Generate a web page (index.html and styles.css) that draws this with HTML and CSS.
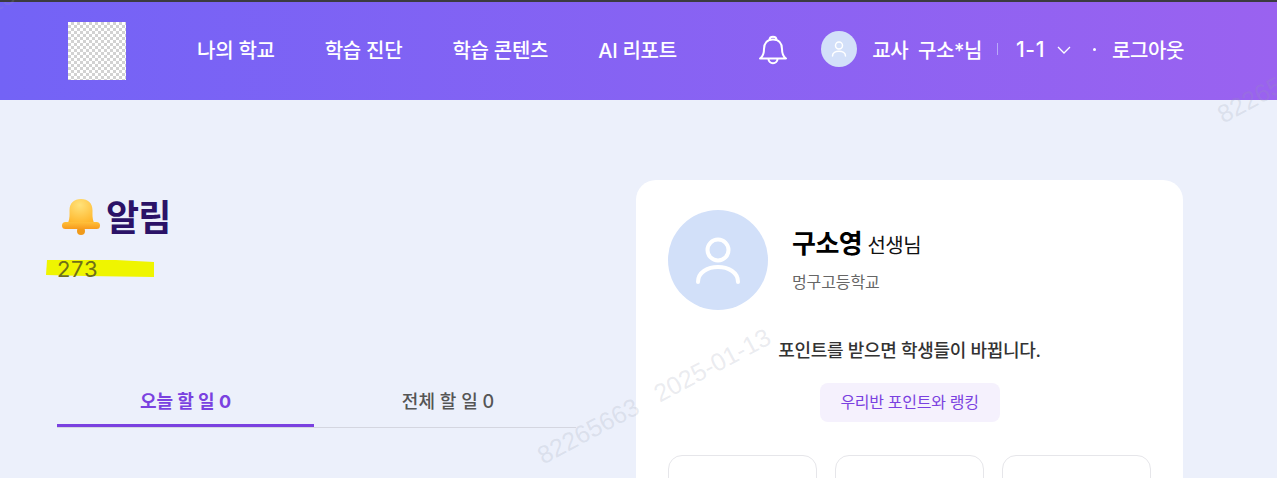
FILE: index.html
```html
<!DOCTYPE html>
<html lang="ko">
	<head>
		<meta charset="UTF-8">
		<meta name="viewport" content="width=device-width, initial-scale=1">
		<title>알림</title>
		<link rel="stylesheet" href="styles.css">
	</head>
	<body>
		<header class="top-bar">
			<div class="logo"></div>
			<nav class="main-nav">
				<a href="#">나의 학교</a>
				<a href="#">학습 진단</a>
				<a href="#">학습 콘텐츠</a>
				<a href="#">AI 리포트</a>
			</nav>
			<div class="user-menu">
				<svg class="bell-line" width="30" height="32" viewBox="0 0 30 32" fill="none" stroke="#fff" stroke-width="2" stroke-linecap="round" stroke-linejoin="round">
					<path d="M11.5 7 C11.5 2.5 18.5 2.5 18.5 7"/>
					<path d="M2 25.5 C5 23.5 6 20 6 16 C6 10 9.500 6.500 15 6.500 C20.500 6.500 24 10 24 16 C24 20 25 23.500 28 25.500 Z"/>
					<path d="M10.500 26 C10.500 31.500 19.500 31.500 19.500 26"/>
				</svg>
				<span class="avatar-small">
					<svg width="20" height="20" viewBox="0 0 20 20" fill="none" stroke="#fff" stroke-width="1.500" stroke-linecap="round">
						<circle cx="10" cy="6.500" r="3.500"/>
						<path d="M3.500 17 C3.500 10.500 16.500 10.500 16.500 17"/>
					</svg>
				</span>
				<span class="user-name">교사&nbsp; 구소*님</span>
				<span class="divider"></span>
				<span class="class-name">1-1</span>
				<svg class="chevron" width="14" height="8" viewBox="0 0 14 8" fill="none" stroke="#fff" stroke-width="1.300">
					<path d="M1 1 L7 7 L13 1"/>
				</svg>
				<span class="dot"></span>
				<a class="logout" href="#">로그아웃</a>
			</div>
		</header>

		<main class="content">
			<section class="left-col">
				<h1 class="page-title">
					<svg class="bell-emoji" width="42" height="38" viewBox="0 0 42 38">
						<defs>
							<radialGradient id="bell-fill" cx="0.45" cy="0.25" r="0.85">
								<stop offset="0" stop-color="#ffe27a"/>
								<stop offset="1" stop-color="#ffb427"/>
							</radialGradient>
							<linearGradient id="brim-fill" x1="0" y1="0" x2="0" y2="1">
								<stop offset="0" stop-color="#ffc03a"/>
								<stop offset="1" stop-color="#f79a1c"/>
							</linearGradient>
						</defs>
						<circle cx="21" cy="33" r="4" fill="#f09a1a"/>
						<path d="M8 25 C10 20 9.500 16 9.500 12.500 C9.500 5 14 1 21 1 C28 1 32.500 5 32.500 12.500 C32.500 16 32 20 34 25 Z" fill="url(#bell-fill)"/>
						<rect x="2" y="24" width="38" height="7" rx="3.500" fill="url(#brim-fill)"/>
					</svg>
					<span>알림</span>
				</h1>
				<div class="count-row">
					<svg class="marker" width="108" height="19" viewBox="0 0 108 19" aria-hidden="true">
						<path d="M1 1 L70 1 L108 3 L108 18 L40 17 L0 16 Z" fill="#eff500"/>
					</svg>
					<span class="count">273</span>
				</div>
				<div class="tabs">
					<a class="tab tab-active" href="#">오늘 할 일 0</a>
					<a class="tab" href="#">전체 할 일 0</a>
				</div>
			</section>

			<aside class="profile-card">
				<div class="profile-head">
					<div class="avatar-large">
						<svg width="48" height="48" viewBox="0 0 48 48" fill="none" stroke="#fff" stroke-width="4" stroke-linecap="round">
							<circle cx="24" cy="14" r="10.500"/>
							<path d="M4 46 C4 26 44 26 44 46"/>
						</svg>
					</div>
					<div class="profile-text">
						<p class="teacher-name"><strong>구소영</strong> 선생님</p>
						<p class="school-name">멍구고등학교</p>
					</div>
				</div>
				<p class="point-text">포인트를 받으면 학생들이 바뀝니다.</p>
				<a class="rank-btn" href="#">우리반 포인트와 랭킹</a>
				<div class="stat-cards">
					<div class="stat-card"></div>
					<div class="stat-card"></div>
					<div class="stat-card"></div>
				</div>
			</aside>
		</main>

		<div class="watermark wm-main">82265663&nbsp;&nbsp; 2025-01-13</div>
		<div class="watermark wm-right">82265663</div>
		<div class="watermark wm-corner">13</div>
	</body>
</html>
```

FILE: styles.css
```css
* {
	box-sizing: border-box;
}
html,
body {
	height: 478px;
	overflow: hidden;
}
body {
	margin: 0;
	position: relative;
	background: #ecf0fb;
	font-family: Inter, "Noto Sans CJK KR", sans-serif;
	color: #333;
}
a {
	color: inherit;
	text-decoration: none;
}
p,
h1 {
	margin: 0;
}

/* header */
.top-bar {
	height: 100px;
	display: flex;
	align-items: center;
	padding: 0 93px 2px 68px;
	border-top: 2px solid #3b3b40;
	background: linear-gradient(90deg, #7363f6, #9a62f0);
	color: #fff;
}
.logo {
	width: 58px;
	height: 58px;
	margin-top: 2px;
	background: repeating-conic-gradient(#d2d2d2 0 25%, #fff 0 50%) 0 0 / 6px 6px;
}
.main-nav {
	display: flex;
	gap: 50px;
	margin-left: 71px;
	margin-bottom: 2px;
	font-size: 20px;
	font-weight: 500;
	letter-spacing: -.25px;
}
.user-menu {
	display: flex;
	align-items: center;
	margin-left: auto;
	margin-bottom: 2px;
	font-size: 20px;
	font-weight: 500;
	letter-spacing: -.4px;
}
.bell-line {
	margin-right: 33px;
}
.avatar-small {
	width: 36px;
	height: 36px;
	border-radius: 50%;
	background: #d3e0f9;
	display: flex;
	align-items: center;
	justify-content: center;
	margin-right: 15px;
}
.divider {
	width: 1px;
	height: 12px;
	margin: 0 18px 0 15px;
	background: #b9a9f8;
}
.class-name {
	font-size: 21px;
	letter-spacing: .6px;
}
.chevron {
	margin: 2px 22px 0 12px;
}
.dot {
	width: 3px;
	height: 3px;
	border-radius: 50%;
	background: #fff;
	margin-right: 16px;
}

/* main */
.content {
	display: flex;
	height: 378px;
	overflow: hidden;
	padding: 80px 0 0 57px;
}
.left-col {
	width: 519px;
	margin-right: 60px;
}
.page-title {
	display: flex;
	align-items: center;
	gap: 4px;
	height: 44px;
	margin-top: 13px;
	font-size: 36px;
	font-weight: 700;
	color: #2b1267;
	letter-spacing: -.8px;
}
.bell-emoji {
	margin-left: 3px;
	margin-top: 4px;
}
.count-row {
	position: relative;
	height: 24px;
	margin-top: 19px;
	font-size: 22px;
	line-height: 26px;
	letter-spacing: .7px;
	color: #6f6f18;
}
.marker {
	position: absolute;
	left: -11px;
	top: 3px;
}
.count {
	position: relative;
}
.tabs {
	display: flex;
	margin-top: 100px;
	border-bottom: 1px solid #d4d6e0;
}
.tab {
	flex: 0 0 257px;
	height: 47px;
	padding-top: 7px;
	text-align: center;
	font-size: 18px;
	font-weight: 500;
	color: #555;
}
.tab + .tab {
	flex: 1;
	padding-left: 6px;
}
.tab-active {
	font-weight: 700;
	color: #7a41e0;
	border-bottom: 3px solid #7a41e0;
	margin-bottom: -1px;
}

/* profile card */
.profile-card {
	width: 547px;
	height: 400px;
	padding: 30px 32px;
	border-radius: 20px;
	background: #fff;
	display: flex;
	flex-direction: column;
	align-items: center;
}
.profile-head {
	align-self: stretch;
	display: flex;
	align-items: center;
	gap: 24px;
}
.profile-text {
	padding-top: 1px;
}
.avatar-large {
	width: 100px;
	height: 100px;
	border-radius: 50%;
	background: #d2e0f9;
	display: flex;
	align-items: center;
	justify-content: center;
}
.teacher-name {
	font-size: 20px;
	line-height: 32px;
	color: #111;
	letter-spacing: -.5px;
}
.teacher-name strong {
	font-size: 26px;
	color: #000;
}
.school-name {
	margin-top: 9px;
	font-size: 16px;
	line-height: 22px;
	color: #666;
	letter-spacing: -.1px;
}
.point-text {
	margin-top: 29px;
	font-size: 18px;
	line-height: 24px;
	font-weight: 500;
	letter-spacing: -.3px;
}
.rank-btn {
	margin-top: 20px;
	width: 180px;
	height: 40px;
	line-height: 39px;
	text-align: center;
	border-radius: 8px;
	background: #f5f1fd;
	color: #7a41e0;
	font-size: 16px;
	letter-spacing: -.3px;
}
.stat-cards {
	align-self: stretch;
	display: flex;
	gap: 18px;
	margin-top: 33px;
}
.stat-card {
	flex: 0 0 149px;
	height: 100px;
	border: 1px solid #e6e6ea;
	border-radius: 14px;
}

/* watermark laid over the page */
.watermark {
	position: absolute;
	transform: rotate(-28deg);
	transform-origin: 0 100%;
	font-family: "Liberation Sans", sans-serif;
	font-size: 25px;
	color: rgba(150, 155, 175, .2);
	white-space: nowrap;
	pointer-events: none;
}
.wm-main {
	left: 546px;
	top: 441px;
}
.wm-right {
	left: 1226px;
	top: 100px;
}
.wm-corner {
	left: -5px;
	top: -10px;
}
```
